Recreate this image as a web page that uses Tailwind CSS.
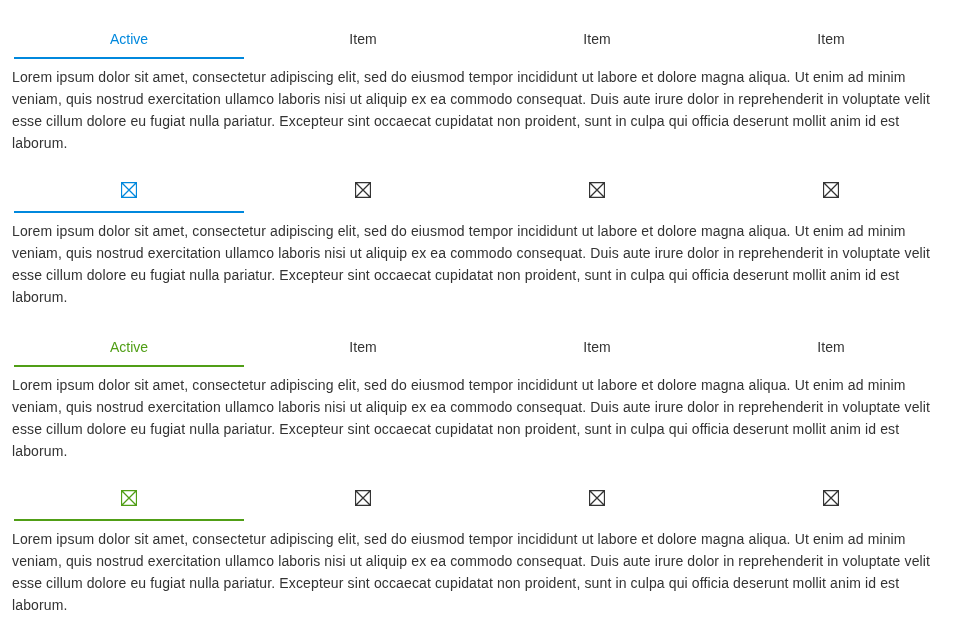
<!DOCTYPE html>
<html lang="en">
<head>
<meta charset="utf-8">
<title>Tabs</title>
<script src="https://cdn.jsdelivr.net/npm/@tailwindcss/browser@4"></script>
</head>
<body class="bg-white px-3 pt-5 text-[14px] leading-[22px] tracking-[0.13px] text-[#333] font-['Liberation_Sans',Arial,sans-serif]">
<svg class="hidden"><symbol id="box" viewBox="0 0 16 16"><path d="M.5.5h15v15H.5zM.5.5l15 15M15.5.5l-15 15" fill="none" stroke="currentColor" stroke-width="1.3"/></symbol></svg>
<main class="will-change-transform">
<section class="h-[154px]">
  <nav class="grid grid-cols-4 text-center">
    <a class="mx-0.5 h-[39px] border-b-2 border-[#0088dd] pt-2 tracking-normal text-[#0088dd]">Active</a><a class="pt-2">Item</a><a class="pt-2">Item</a><a class="pt-2">Item</a>
  </nav>
  <p class="pt-[7px]">Lorem ipsum dolor sit amet, consectetur adipiscing elit, sed do eiusmod tempor incididunt ut labore et dolore magna aliqua. Ut enim ad minim veniam, quis nostrud exercitation ullamco laboris nisi ut aliquip ex ea commodo consequat. Duis aute irure dolor in reprehenderit in voluptate velit esse cillum dolore eu fugiat nulla pariatur. Excepteur sint occaecat cupidatat non proident, sunt in culpa qui officia deserunt mollit anim id est laborum.</p>
</section>
<section class="h-[154px]">
  <nav class="grid grid-cols-4">
    <a class="mx-0.5 flex h-[39px] justify-center border-b-2 border-[#0088dd] pt-2 text-[#0088dd]"><svg class="size-4"><use href="#box"/></svg></a><a class="flex justify-center pt-2"><svg class="size-4"><use href="#box"/></svg></a><a class="flex justify-center pt-2"><svg class="size-4"><use href="#box"/></svg></a><a class="flex justify-center pt-2"><svg class="size-4"><use href="#box"/></svg></a>
  </nav>
  <p class="pt-[7px]">Lorem ipsum dolor sit amet, consectetur adipiscing elit, sed do eiusmod tempor incididunt ut labore et dolore magna aliqua. Ut enim ad minim veniam, quis nostrud exercitation ullamco laboris nisi ut aliquip ex ea commodo consequat. Duis aute irure dolor in reprehenderit in voluptate velit esse cillum dolore eu fugiat nulla pariatur. Excepteur sint occaecat cupidatat non proident, sunt in culpa qui officia deserunt mollit anim id est laborum.</p>
</section>
<section class="h-[154px]">
  <nav class="grid grid-cols-4 text-center">
    <a class="mx-0.5 h-[39px] border-b-2 border-[#509e16] pt-2 tracking-normal text-[#509e16]">Active</a><a class="pt-2">Item</a><a class="pt-2">Item</a><a class="pt-2">Item</a>
  </nav>
  <p class="pt-[7px]">Lorem ipsum dolor sit amet, consectetur adipiscing elit, sed do eiusmod tempor incididunt ut labore et dolore magna aliqua. Ut enim ad minim veniam, quis nostrud exercitation ullamco laboris nisi ut aliquip ex ea commodo consequat. Duis aute irure dolor in reprehenderit in voluptate velit esse cillum dolore eu fugiat nulla pariatur. Excepteur sint occaecat cupidatat non proident, sunt in culpa qui officia deserunt mollit anim id est laborum.</p>
</section>
<section>
  <nav class="grid grid-cols-4">
    <a class="mx-0.5 flex h-[39px] justify-center border-b-2 border-[#509e16] pt-2 text-[#509e16]"><svg class="size-4"><use href="#box"/></svg></a><a class="flex justify-center pt-2"><svg class="size-4"><use href="#box"/></svg></a><a class="flex justify-center pt-2"><svg class="size-4"><use href="#box"/></svg></a><a class="flex justify-center pt-2"><svg class="size-4"><use href="#box"/></svg></a>
  </nav>
  <p class="pt-[7px]">Lorem ipsum dolor sit amet, consectetur adipiscing elit, sed do eiusmod tempor incididunt ut labore et dolore magna aliqua. Ut enim ad minim veniam, quis nostrud exercitation ullamco laboris nisi ut aliquip ex ea commodo consequat. Duis aute irure dolor in reprehenderit in voluptate velit esse cillum dolore eu fugiat nulla pariatur. Excepteur sint occaecat cupidatat non proident, sunt in culpa qui officia deserunt mollit anim id est laborum.</p>
</section>
</main>
</body>
</html>
